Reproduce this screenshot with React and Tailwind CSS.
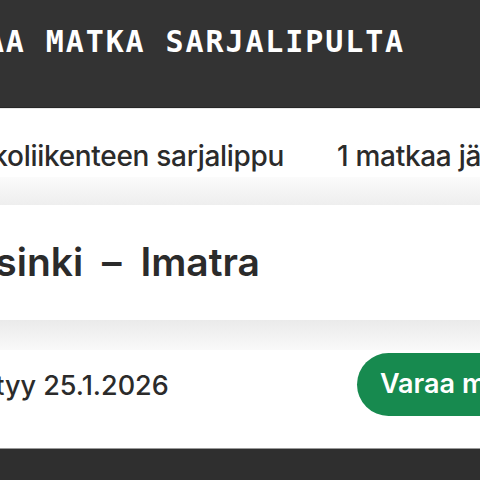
import React from 'react';

const Card = ({ children, className = '' }) => (
  <div className={`bg-white ${className}`}>{children}</div>
);

export default function App() {
  return (
    <div className="w-[480px] h-[480px] overflow-hidden bg-white font-['Inter','Liberation_Sans',sans-serif] text-[#2b2b2b]">
      {/* Header */}
      <div className="h-[107px] bg-[#333333] pt-[27px] whitespace-nowrap">
        <h1 className="-ml-[74px] font-['DejaVu_Sans_Mono',monospace] font-bold text-[30px] leading-[30px] tracking-[1.9px] text-white">
          VARAA MATKA SARJALIPULTA
        </h1>
      </div>
      <div className="h-[1px] bg-[#262626]" />
      <div className="h-[1px] bg-[#e8e8e8]" />

      {/* Ticket type + trips left */}
      <Card className="h-[68px] flex items-end pb-[5px] whitespace-nowrap tracking-[-0.3px]">
        <div className="w-[337px] shrink-0">
          <span className="block -ml-[72px] text-[28px] font-medium leading-[32px]">Joukkoliikenteen sarjalippu</span>
        </div>
        <span className="text-[28px] font-medium leading-[32px]">1 matkaa jäljellä</span>
      </Card>
      <div className="h-[28px] bg-gradient-to-b from-[#fbfbfb] to-[#eeeeee]" />

      {/* Route */}
      <Card className="h-[115px] pt-[34px] whitespace-nowrap">
        <h2 className="-ml-[67px] text-[39px] font-semibold leading-[46px]">
          Helsinki<span className="mx-[9px]"> – </span>Imatra
        </h2>
      </Card>
      <div className="h-[30px] bg-gradient-to-b from-[#eaeaea] to-[#f9f9f9]" />

      {/* Validity + booking */}
      <Card className="h-[98px] flex items-start pt-[3px] whitespace-nowrap">
        <div className="w-[357px] shrink-0 pt-[17px]">
          <span className="block -ml-[232px] text-[27px] font-medium leading-[32px]">Voimassaolo päättyy 25.1.2026</span>
        </div>
        <button className="h-[63px] rounded-full bg-[#178a4f] pl-[23px] pr-[28px] text-white text-[27px] font-semibold">
          Varaa matka
        </button>
      </Card>
      <div className="h-[1px] bg-[#9a9a9a]" />
      <div className="h-[40px] bg-[#2f2f2f]" />
    </div>
  );
}
